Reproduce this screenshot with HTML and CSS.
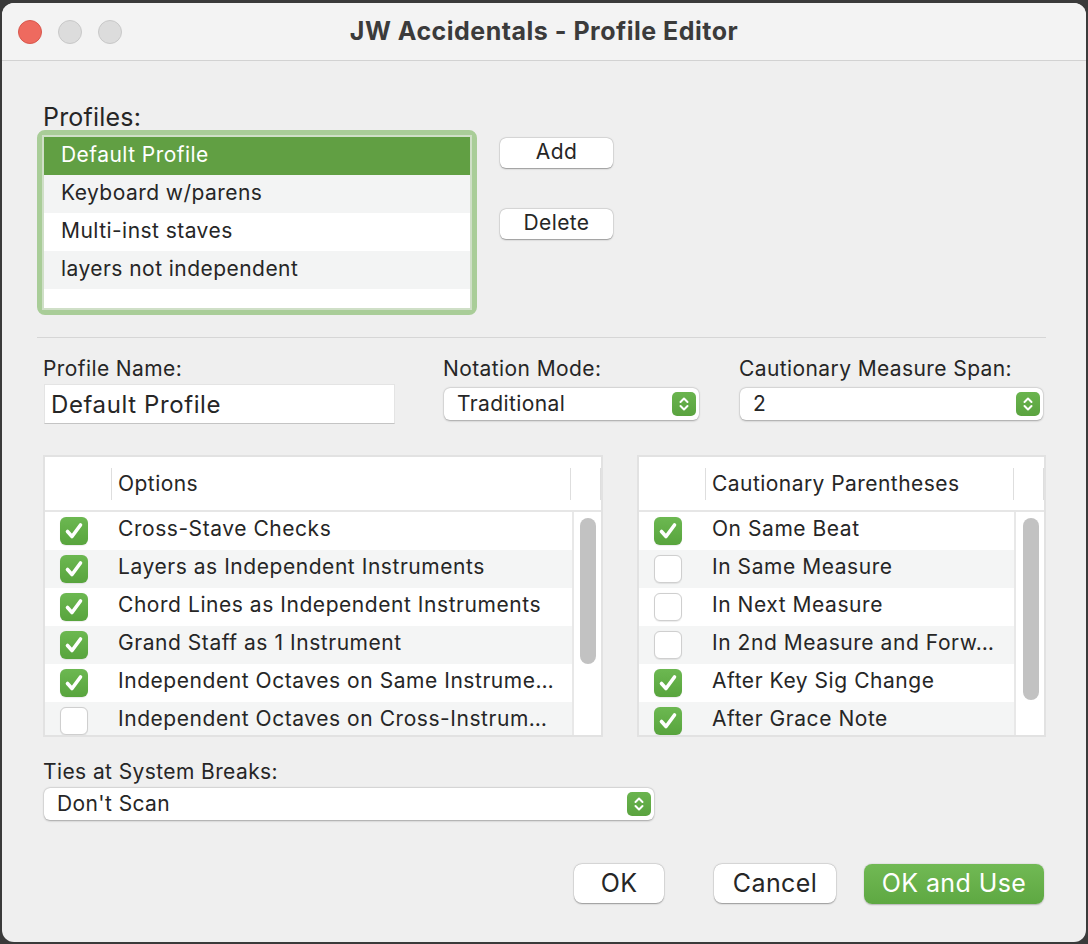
FILE: index.html
```html
<!DOCTYPE html>
<html>
<head>
<meta charset="utf-8">
<link rel="stylesheet" href="styles.css">
</head>
<body>
<div class="window">
  <div class="titlebar">
    <div class="lights">
      <span class="light red"></span>
      <span class="light gray"></span>
      <span class="light gray"></span>
    </div>
    <div class="title">JW Accidentals - Profile Editor</div>
    <div></div>
  </div>
  <div class="content">
    <div class="biglabel">Profiles:</div>
    <div class="profiles">
      <div class="ring">
        <div class="list">
          <div class="lrow sel">Default Profile</div>
          <div class="lrow alt">Keyboard w/parens</div>
          <div class="lrow">Multi-inst staves</div>
          <div class="lrow alt">layers not independent</div>
          <div class="lrow blank"></div>
        </div>
      </div>
      <div class="sidebtns">
        <div class="btn small">Add</div>
        <div class="btn small del">Delete</div>
      </div>
    </div>
    <div class="sep"></div>
    <div class="fields">
      <div class="field f1">
        <div class="label">Profile Name:</div>
        <div class="input">Default Profile</div>
      </div>
      <div class="field f2">
        <div class="label">Notation Mode:</div>
        <div class="select"><span>Traditional</span><span class="stepper"><svg viewBox="0 0 24 24" width="24" height="24"><path d="M8.5 10 L12 6.5 L15.5 10 M8.5 14 L12 17.5 L15.5 14" fill="none" stroke="#fff" stroke-width="2" stroke-linecap="round" stroke-linejoin="round"/></svg></span></div>
      </div>
      <div class="field f3">
        <div class="label">Cautionary Measure Span:</div>
        <div class="select"><span>2</span><span class="stepper"><svg viewBox="0 0 24 24" width="24" height="24"><path d="M8.5 10 L12 6.5 L15.5 10 M8.5 14 L12 17.5 L15.5 14" fill="none" stroke="#fff" stroke-width="2" stroke-linecap="round" stroke-linejoin="round"/></svg></span></div>
      </div>
    </div>
    <div class="tables">
      <div class="table left">
        <div class="thead">
          <div class="hc1"></div><div class="hsep"></div>
          <div class="hc2">Options</div><div class="hsep"></div>
          <div class="hc3"></div><div class="hsep"></div>
        </div>
        <div class="tbody">
          <div class="rows">
            <div class="trow"><span class="cb on"></span><span class="tt">Cross-Stave Checks</span></div>
            <div class="trow alt"><span class="cb on"></span><span class="tt">Layers as Independent Instruments</span></div>
            <div class="trow"><span class="cb on"></span><span class="tt">Chord Lines as Independent Instruments</span></div>
            <div class="trow alt"><span class="cb on"></span><span class="tt">Grand Staff as 1 Instrument</span></div>
            <div class="trow"><span class="cb on"></span><span class="tt">Independent Octaves on Same Instrume…</span></div>
            <div class="trow alt"><span class="cb"></span><span class="tt">Independent Octaves on Cross-Instrum…</span></div>
          </div>
          <div class="track"><div class="thumb"></div></div>
        </div>
      </div>
      <div class="table right">
        <div class="thead">
          <div class="hc1"></div><div class="hsep"></div>
          <div class="hc2">Cautionary Parentheses</div><div class="hsep"></div>
          <div class="hc3"></div><div class="hsep"></div>
        </div>
        <div class="tbody">
          <div class="rows">
            <div class="trow"><span class="cb on"></span><span class="tt">On Same Beat</span></div>
            <div class="trow alt"><span class="cb"></span><span class="tt">In Same Measure</span></div>
            <div class="trow"><span class="cb"></span><span class="tt">In Next Measure</span></div>
            <div class="trow alt"><span class="cb"></span><span class="tt">In 2nd Measure and Forw…</span></div>
            <div class="trow"><span class="cb on"></span><span class="tt">After Key Sig Change</span></div>
            <div class="trow alt"><span class="cb on"></span><span class="tt">After Grace Note</span></div>
          </div>
          <div class="track"><div class="thumb"></div></div>
        </div>
      </div>
    </div>
    <div class="ties">
      <div class="label">Ties at System Breaks:</div>
      <div class="select wide"><span>Don't Scan</span><span class="stepper"><svg viewBox="0 0 24 24" width="24" height="24"><path d="M8.5 10 L12 6.5 L15.5 10 M8.5 14 L12 17.5 L15.5 14" fill="none" stroke="#fff" stroke-width="2" stroke-linecap="round" stroke-linejoin="round"/></svg></span></div>
    </div>
    <div class="footer">
      <div class="btn big ok">OK</div>
      <div class="btn big cancel">Cancel</div>
      <div class="btn big primary">OK and Use</div>
    </div>
  </div>
</div>
</body>
</html>
```

FILE: styles.css
```css
* { box-sizing: border-box; }
html, body { margin: 0; padding: 0; }
body {
  background: #3a3a3a;
  width: 1088px;
  height: 944px;
  overflow: hidden;
  font-family: "Inter", "Noto Sans", sans-serif;
  color: #262626;
}
.window {
  margin: 3px 0 0 2px;
  width: 1084px;
  height: 939px;
  background: #efefef;
  border-radius: 12px;
  overflow: hidden;
}
.titlebar {
  height: 58px;
  background: #f3f3f3;
  border-bottom: 1px solid #d2d2d2;
  display: grid;
  grid-template-columns: 1fr auto 1fr;
  align-items: center;
}
.lights { display: flex; gap: 16px; padding-left: 16px; padding-top: 1px; }
.light {
  width: 24px; height: 24px; border-radius: 50%;
  display: block;
}
.light.red { background: #ee6a5f; border: 1px solid #d8574d; }
.light.gray { background: #dcdcdc; border: 1px solid #c8c8c8; }
.title {
  font-weight: 700;
  font-size: 25px;
  color: #3b3b3b;
  letter-spacing: 0.5px;
  padding-bottom: 2px;
}
.content {
  padding: 45px 40px 0 41px;
}
.biglabel {
  font-size: 25px;
  line-height: 25px;
  height: 25px;
  letter-spacing: 0.2px;
  margin-top: -1px;
}
.profiles { display: flex; align-items: flex-start; }
.ring {
  margin-left: -6px;
  width: 440px;
  height: 185px;
  border: 5px solid #a9cd98;
  border-radius: 8px;
  background: #a9cd98;
}
.list {
  background: #fff;
  border: 2px solid #cfdfc7;
  height: 175px;
}
.lrow {
  height: 38px;
  line-height: 36px;
  padding-left: 17px;
  font-size: 21px;
  letter-spacing: 0.45px;
}
.lrow.alt { background: #f3f4f4; }
.lrow.sel { background: #619f43; color: #fff; }
.lrow.blank { height: 20px; }
.sidebtns {
  margin-left: 23px;
  margin-top: 8px;
  display: flex;
  flex-direction: column;
}
.btn {
  background: #fff;
  border-radius: 6px;
  box-shadow: 0 0.5px 1.5px rgba(0,0,0,0.35), 0 0 0 0.5px rgba(0,0,0,0.08);
  text-align: center;
  letter-spacing: 0.4px;
}
.btn.small {
  width: 113px;
  height: 30px;
  line-height: 28px;
  font-size: 21px;
}
.btn.del { margin-top: 41px; }
.sep {
  margin: 22px 0 0 -6px;
  height: 1px;
  background: #d6d6d6;
  width: 1009px;
}
.fields { display: flex; margin-top: 19px; align-items: flex-start; }
.label {
  font-size: 21px;
  line-height: 24px;
  height: 24px;
  letter-spacing: 0.4px;
}
.f1 { width: 352px; margin-right: 48px; }
.f2 { width: 257px; margin-right: 39px; }
.f3 { width: 305px; }
.input {
  margin: 3px 0 0 1px;
  height: 40px;
  background: #fff;
  border: 1px solid #e4e4e4;
  border-bottom: 1px solid #c4c4c4;
  font-size: 24px;
  line-height: 40px;
  padding-left: 6px;
  letter-spacing: 0.6px;
}
.select {
  margin: 7px 0 0 1px;
  height: 32px;
  background: #fff;
  border-radius: 6px;
  box-shadow: 0 0.5px 2px rgba(0,0,0,0.3), 0 0 0 0.5px rgba(0,0,0,0.06);
  display: flex;
  align-items: center;
  justify-content: space-between;
  padding: 0 3px 0 13px;
  font-size: 21px;
  letter-spacing: 0.4px;
}
.select span:first-child { padding-bottom: 1px; }
.f2 .select { width: 255px; }
.f3 .select { width: 303px; }
.stepper {
  width: 24px; height: 24px;
  border-radius: 5px;
  background: linear-gradient(#6ab44e, #5aa33f);
  display: block;
}
.stepper svg { display: block; }
.tables { display: flex; margin-top: 31px; }
.table {
  height: 282px;
  border: 2px solid #e2e2e2;
  background: #fff;
  display: flex;
  flex-direction: column;
}
.table.left { width: 560px; }
.table.right { width: 409px; margin-left: 34px; }
.thead {
  height: 55px;
  border-bottom: 2px solid #e6e6e6;
  display: flex;
  align-items: center;
  flex: none;
}
.hc1 { width: 66px; }
.hsep { width: 1px; height: 32px; background: #dedede; }
.hc2 { flex: 1; padding-left: 6px; font-size: 21px; letter-spacing: 0.45px; }
.hc3 { width: 29px; }
.tbody { flex: 1; display: flex; overflow: hidden; }
.rows { flex: 1; overflow: hidden; }
.trow {
  height: 38px;
  display: flex;
  align-items: center;
  font-size: 21px;
  letter-spacing: 0.55px;
  white-space: nowrap;
}
.trow.alt { background: #f4f5f5; }
.tt { margin-left: 30px; padding-bottom: 5px; }
.cb {
  width: 28px; height: 28px;
  margin-left: 15px;
  border-radius: 6px;
  background: #fff;
  border: 1px solid #cfcfcf;
  box-shadow: 0 0.5px 1px rgba(0,0,0,0.08);
  flex: none;
  display: block;
}
.cb.on {
  border: none;
  background-color: #5fab44;
  background-image: url("data:image/svg+xml,%3Csvg xmlns='http://www.w3.org/2000/svg' viewBox='0 0 28 28'%3E%3Cpath d='M7.5 14.5 L12 19.5 L20.5 8' fill='none' stroke='white' stroke-width='3.6' stroke-linecap='round' stroke-linejoin='round'/%3E%3C/svg%3E"), linear-gradient(#6cb851, #58a43d);
  background-size: 100% 100%;
}
.track {
  border-left: 2px solid #e8e8e8;
  background: #fff;
  flex: none;
  padding-top: 6px;
}
.left .track { width: 29px; padding-left: 6px; }
.right .track { width: 30px; padding-left: 7px; }
.thumb {
  width: 16px;
  background: #c2c2c2;
  border-radius: 8px;
}
.left .thumb { height: 146px; }
.right .thumb { height: 182px; }
.ties { margin-top: 23px; }
.select.wide { margin-top: 4px; width: 610px; }
.footer {
  display: flex;
  justify-content: flex-end;
  margin-top: 44px;
  padding-right: 2px;
}
.btn.big {
  height: 39px;
  line-height: 38px;
  font-size: 25px;
  border-radius: 8px;
}
.btn.ok { width: 90px; margin-right: 50px; }
.btn.cancel { width: 122px; margin-right: 28px; }
.btn.primary {
  width: 180px;
  height: 40px;
  color: #fff;
  background: linear-gradient(#71b954, #5ea842);
  box-shadow: 0 0.5px 1.5px rgba(0,0,0,0.25);
}
```
